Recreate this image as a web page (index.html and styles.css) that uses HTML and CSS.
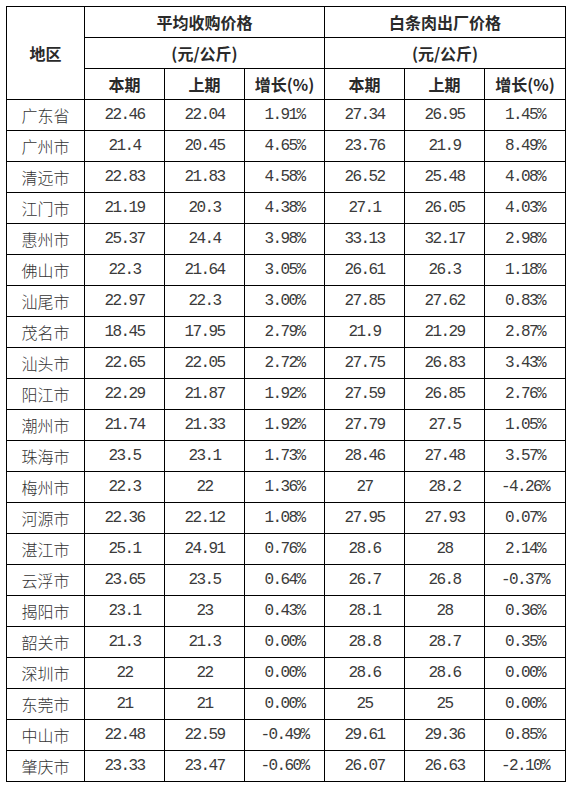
FILE: index.html
```html
<!DOCTYPE html>
<html lang="zh">
<head>
<meta charset="utf-8">
<title>价格表</title>
<link rel="stylesheet" href="styles.css">
</head>
<body>
<table class="price">
<colgroup>
<col class="c-area"><col class="c-n"><col class="c-n"><col class="c-n"><col class="c-n"><col class="c-n"><col class="c-last">
</colgroup>
<thead>
<tr><th rowspan="3">地区</th><th colspan="3">平均收购价格</th><th colspan="3">白条肉出厂价格</th></tr>
<tr><th colspan="3">(元/公斤)</th><th colspan="3">(元/公斤)</th></tr>
<tr><th>本期</th><th>上期</th><th>增长(%)</th><th>本期</th><th>上期</th><th>增长(%)</th></tr>
</thead>
<tbody>
<tr><td class="area">广东省</td><td>22.46</td><td>22.04</td><td>1.91%</td><td>27.34</td><td>26.95</td><td>1.45%</td></tr>
<tr><td class="area">广州市</td><td>21.4</td><td>20.45</td><td>4.65%</td><td>23.76</td><td>21.9</td><td>8.49%</td></tr>
<tr><td class="area">清远市</td><td>22.83</td><td>21.83</td><td>4.58%</td><td>26.52</td><td>25.48</td><td>4.08%</td></tr>
<tr><td class="area">江门市</td><td>21.19</td><td>20.3</td><td>4.38%</td><td>27.1</td><td>26.05</td><td>4.03%</td></tr>
<tr><td class="area">惠州市</td><td>25.37</td><td>24.4</td><td>3.98%</td><td>33.13</td><td>32.17</td><td>2.98%</td></tr>
<tr><td class="area">佛山市</td><td>22.3</td><td>21.64</td><td>3.05%</td><td>26.61</td><td>26.3</td><td>1.18%</td></tr>
<tr><td class="area">汕尾市</td><td>22.97</td><td>22.3</td><td>3.00%</td><td>27.85</td><td>27.62</td><td>0.83%</td></tr>
<tr><td class="area">茂名市</td><td>18.45</td><td>17.95</td><td>2.79%</td><td>21.9</td><td>21.29</td><td>2.87%</td></tr>
<tr><td class="area">汕头市</td><td>22.65</td><td>22.05</td><td>2.72%</td><td>27.75</td><td>26.83</td><td>3.43%</td></tr>
<tr><td class="area">阳江市</td><td>22.29</td><td>21.87</td><td>1.92%</td><td>27.59</td><td>26.85</td><td>2.76%</td></tr>
<tr><td class="area">潮州市</td><td>21.74</td><td>21.33</td><td>1.92%</td><td>27.79</td><td>27.5</td><td>1.05%</td></tr>
<tr><td class="area">珠海市</td><td>23.5</td><td>23.1</td><td>1.73%</td><td>28.46</td><td>27.48</td><td>3.57%</td></tr>
<tr><td class="area">梅州市</td><td>22.3</td><td>22</td><td>1.36%</td><td>27</td><td>28.2</td><td>-4.26%</td></tr>
<tr><td class="area">河源市</td><td>22.36</td><td>22.12</td><td>1.08%</td><td>27.95</td><td>27.93</td><td>0.07%</td></tr>
<tr><td class="area">湛江市</td><td>25.1</td><td>24.91</td><td>0.76%</td><td>28.6</td><td>28</td><td>2.14%</td></tr>
<tr><td class="area">云浮市</td><td>23.65</td><td>23.5</td><td>0.64%</td><td>26.7</td><td>26.8</td><td>-0.37%</td></tr>
<tr><td class="area">揭阳市</td><td>23.1</td><td>23</td><td>0.43%</td><td>28.1</td><td>28</td><td>0.36%</td></tr>
<tr><td class="area">韶关市</td><td>21.3</td><td>21.3</td><td>0.00%</td><td>28.8</td><td>28.7</td><td>0.35%</td></tr>
<tr><td class="area">深圳市</td><td>22</td><td>22</td><td>0.00%</td><td>28.6</td><td>28.6</td><td>0.00%</td></tr>
<tr><td class="area">东莞市</td><td>21</td><td>21</td><td>0.00%</td><td>25</td><td>25</td><td>0.00%</td></tr>
<tr><td class="area">中山市</td><td>22.48</td><td>22.59</td><td>-0.49%</td><td>29.61</td><td>29.36</td><td>0.85%</td></tr>
<tr><td class="area">肇庆市</td><td>23.33</td><td>23.47</td><td>-0.60%</td><td>26.07</td><td>26.63</td><td>-2.10%</td></tr>
</tbody>
</table>
</body>
</html>
```
FILE: styles.css
```css
html, body {
  margin: 0;
  padding: 0;
  background: #fff;
}
body {
  padding: 6px;
}
.price {
  border-collapse: collapse;
  table-layout: fixed;
  width: 560px;
}
.c-area { width: 78px; }
.c-n { width: 80px; }
.c-last { width: 81px; }
.price tr {
  height: 31px;
}
.price th,
.price td {
  border: 1px solid #000;
  padding: 0;
  text-align: center;
  vertical-align: middle;
  height: 30px;
  line-height: 20px;
}
.price th {
  font-family: "Noto Sans CJK SC", sans-serif;
  font-weight: bold;
  font-size: 16px;
  color: #2a2a2a;
}
.price td {
  font-family: "Liberation Mono", "Noto Sans CJK SC", monospace;
  font-size: 16px;
  letter-spacing: -1.6px;
  color: #3a3a3a;
}
.price td.area {
  font-family: "Noto Sans CJK SC", sans-serif;
  letter-spacing: 0;
  font-weight: 300;
  color: #333;
}
```
